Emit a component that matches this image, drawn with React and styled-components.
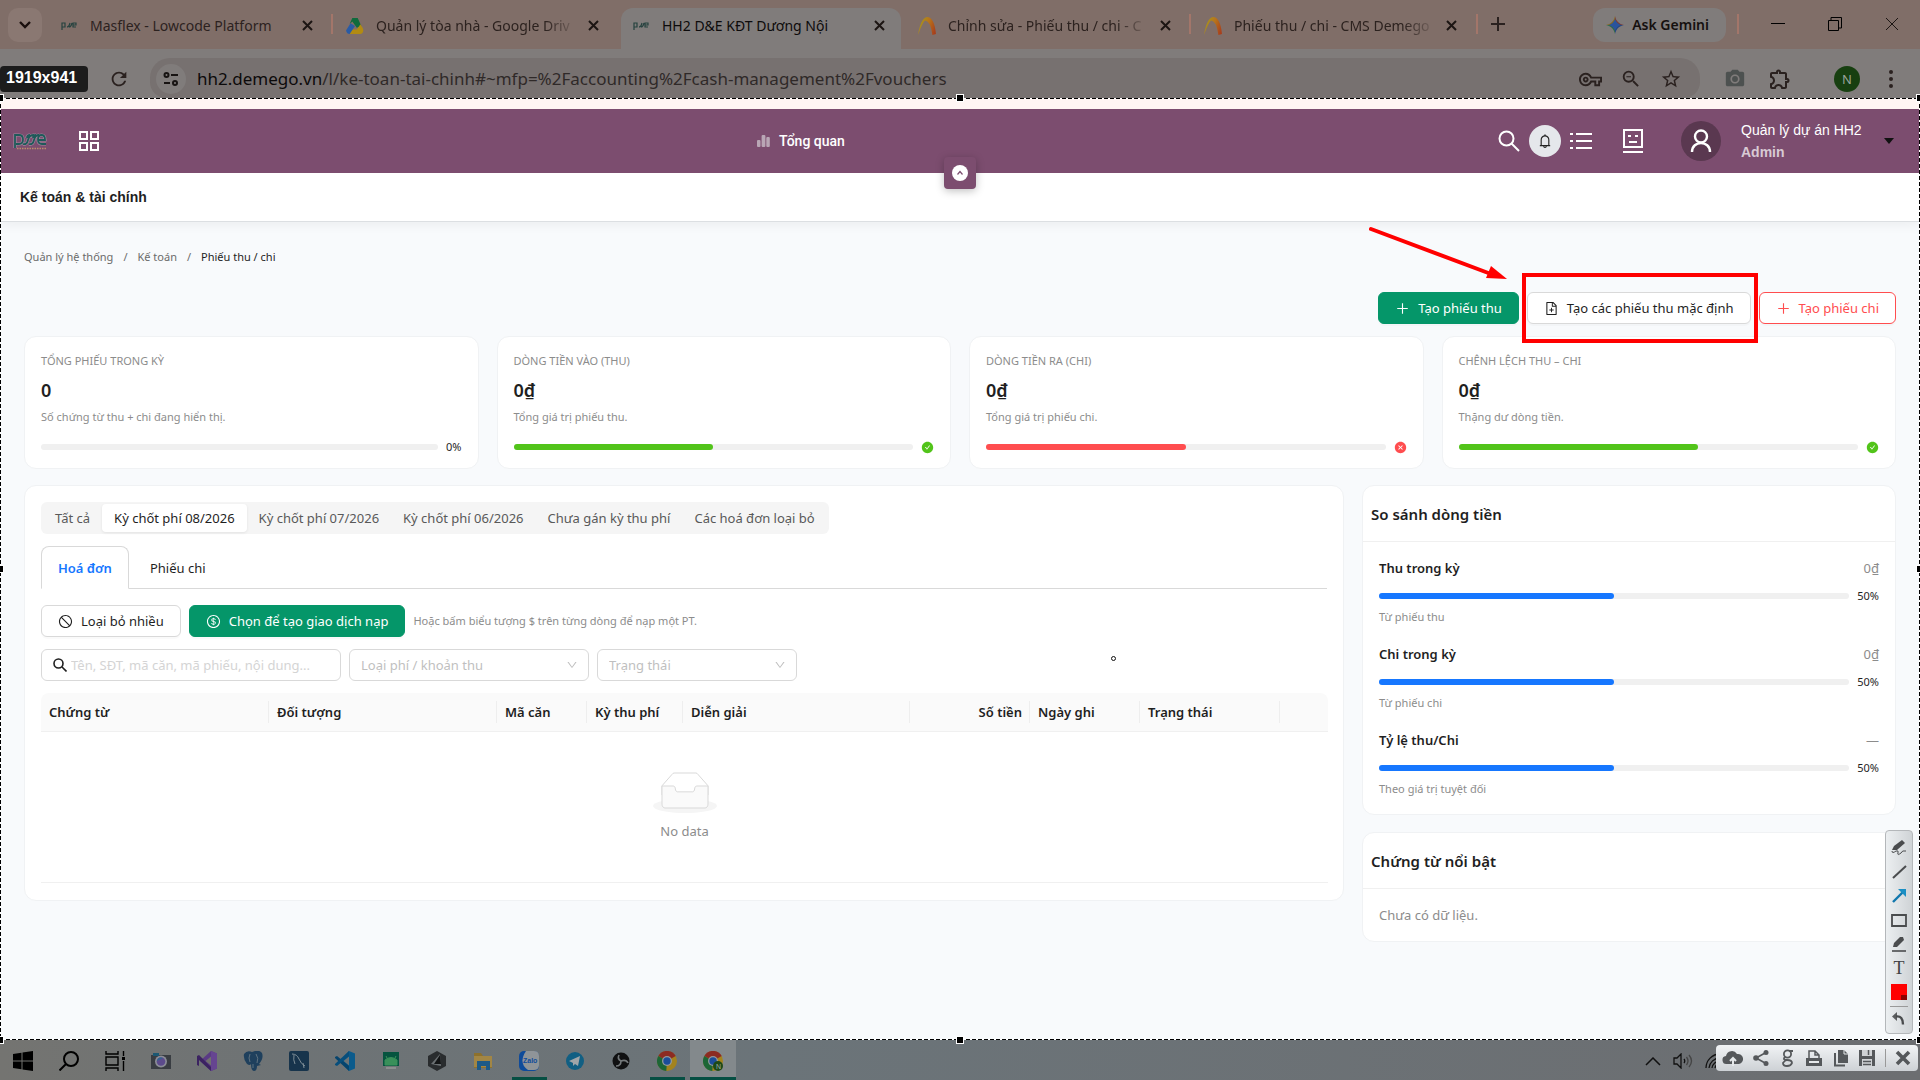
import React from "react";
import styled, { createGlobalStyle, css } from "styled-components";
import {
  AiFillCheckCircle,
  AiFillCloseCircle,
  AiOutlineBell,
  AiOutlineDollar,
  AiOutlineDown,
  AiOutlineFileAdd,
  AiOutlinePlus,
  AiOutlineStop,
} from "react-icons/ai";
import {
  MdCameraAlt,
  MdOutlineExtension,
  MdOutlineVpnKey,
  MdRefresh,
  MdStarBorder,
  MdZoomOut,
} from "react-icons/md";

const tabs = [
  { title: "Masflex - Lowcode Platform", icon: "pse" },
  { title: "Quản lý tòa nhà - Google Driv", icon: "drive", line: true, fade: true },
  { title: "HH2 D&E KĐT Dương Nội", icon: "pse", active: true },
  { title: "Chỉnh sửa - Phiếu thu / chi - C", icon: "arch", fade: true },
  { title: "Phiếu thu / chi - CMS Demego", icon: "arch", line: true, fade: true },
];

const stats = [
  { label: "TỔNG PHIẾU TRONG KỲ", value: "0", note: "Số chứng từ thu + chi đang hiển thị.", percent: 0, color: "#1677ff" },
  { label: "DÒNG TIỀN VÀO (THU)", value: "0₫", note: "Tổng giá trị phiếu thu.", percent: 50, color: "#52c41a", state: "ok" },
  { label: "DÒNG TIỀN RA (CHI)", value: "0₫", note: "Tổng giá trị phiếu chi.", percent: 50, color: "#ff4d4f", state: "bad" },
  { label: "CHÊNH LỆCH THU – CHI", value: "0₫", note: "Thặng dư dòng tiền.", percent: 60, color: "#52c41a", state: "ok" },
];

const periods = [
  "Tất cả",
  "Kỳ chốt phí 08/2026",
  "Kỳ chốt phí 07/2026",
  "Kỳ chốt phí 06/2026",
  "Chưa gán kỳ thu phí",
  "Các hoá đơn loại bỏ",
];

const columns = [
  { title: "Chứng từ", width: 228 },
  { title: "Đối tượng", width: 228 },
  { title: "Mã căn", width: 90 },
  { title: "Kỳ thu phí", width: 96 },
  { title: "Diễn giải", width: 227 },
  { title: "Số tiền", width: 120, right: true },
  { title: "Ngày ghi", width: 110 },
  { title: "Trạng thái", width: 140 },
  { title: "", width: 48 },
];

const compare = [
  { label: "Thu trong kỳ", value: "0₫", note: "Từ phiếu thu" },
  { label: "Chi trong kỳ", value: "0₫", note: "Từ phiếu chi" },
  { label: "Tỷ lệ thu/Chi", value: "—", note: "Theo giá trị tuyệt đối" },
];

const apps = [
  "windows", "search", "tasks", "camera", "vs", "postgres", "mysql", "vscode",
  "android", "cursor", "folder", "zalo", "telegram", "obs", "chrome", "chromeN",
];

export default function App() {
  return (
    <>
      <GlobalStyle />
      <Screen>
        <TabStrip>
          <TabSearch aria-label="Tabs"><Chevron /></TabSearch>
          {tabs.map((tab) => (
            <Tab key={tab.title} $active={tab.active} $line={tab.line} $fade={tab.fade}>
              <Favicon name={tab.icon} />
              <span>{tab.title}</span>
              <button aria-label="Close tab"><Cross size={11} width={2} /></button>
            </Tab>
          ))}
          <NewTab aria-label="New tab">
            <svg width="14" height="14" viewBox="0 0 14 14"><path d="M7 0v14M0 7h14" stroke="#2a211f" strokeWidth="2" /></svg>
          </NewTab>
          <Gemini>
            <svg width="18" height="18" viewBox="0 0 18 18">
              <path d="M9 0C10 5 13 8 18 9L9 9Z" fill="#7b3b36" />
              <path d="M18 9C13 10 10 13 9 18V9Z" fill="#23447f" />
              <path d="M9 18C8 13 5 10 0 9H9Z" fill="#2c6a45" />
              <path d="M0 9C5 8 8 5 9 0V9Z" fill="#8a6a1b" />
              <path d="M9 3C10 6 12 8 15 9C12 10 10 12 9 15C8 12 6 10 3 9C6 8 8 6 9 3Z" fill="#2a549c" />
            </svg>
            Ask Gemini
          </Gemini>
          <WindowButtons>
            <button aria-label="Minimize"><svg width="14" height="14" viewBox="0 0 14 14"><path d="M0 6.5h14" stroke="#000" /></svg></button>
            <button aria-label="Restore">
              <svg width="14" height="14" viewBox="0 0 14 14" fill="none" stroke="#000"><path d="M.5 3.5h10v10H.5zM3 3V.5h10.500V11H11" /></svg>
            </button>
            <button aria-label="Close"><Cross size={14} width={1} /></button>
          </WindowButtons>
        </TabStrip>

        <AddressBar>
          <SizeBadge>1919x941</SizeBadge>
          <IconButton aria-label="Reload"><MdRefresh size={22} /></IconButton>
          <Omnibox>
            <SiteInfo>
              <svg width="16" height="14" viewBox="0 0 16 14" fill="none" stroke="#171312" strokeWidth="2">
                <circle cx="3.5" cy="3" r="2" /><path d="M8 3h7M1 11h6" /><circle cx="12" cy="11" r="2" />
              </svg>
            </SiteInfo>
            <Url>
              <b>hh2.demego.vn</b>/l/ke-toan-tai-chinh#~mfp=%2Faccounting%2Fcash-management%2Fvouchers
            </Url>
            <OmniIcons>
              <MdOutlineVpnKey size={23} />
              <MdZoomOut size={22} />
              <MdStarBorder size={22} />
            </OmniIcons>
          </Omnibox>
          <ChromeTools>
            <MdCameraAlt size={22} color="#4d5150" />
            <MdOutlineExtension size={24} />
            <Profile>N</Profile>
            <svg width="4" height="18" viewBox="0 0 4 18" fill="#2a211f"><circle cx="2" cy="2" r="2" /><circle cx="2" cy="9" r="2" /><circle cx="2" cy="16" r="2" /></svg>
          </ChromeTools>
        </AddressBar>

        <Selection>
          <Header>
            <HeaderLeft>
              <Logo />
              <svg width="20" height="20" viewBox="0 0 20 20" fill="none" stroke="#fff" strokeWidth="2">
                <path d="M1 1h7v7H1zM12 1h7v7h-7zM1 12h7v7H1zM12 12h7v7h-7z" />
              </svg>
            </HeaderLeft>
            <Overview>
              <svg width="13" height="12" viewBox="0 0 13 12" fill="#b9a6b5"><rect y="5" width="3.5" height="7" rx="1" /><rect x="4.6" width="3.8" height="12" rx="1" /><rect x="9.3" y="2" width="3.5" height="10" rx="1" /></svg>
              Tổng quan
            </Overview>
            <HeaderRight>
              <svg width="22" height="22" viewBox="0 0 22 22" fill="none" stroke="#fff" strokeWidth="2"><circle cx="8.5" cy="8.5" r="7" /><path d="M13.5 13.5L21 21" /></svg>
              <Bell aria-label="Thông báo"><AiOutlineBell size={16} /></Bell>
              <svg width="22" height="18" viewBox="0 0 22 18" stroke="#fff" strokeWidth="2"><path d="M0 2h3M0 9h3M0 16h3M6 2h16M6 9h16M6 16h16" /></svg>
              <FaceIcon width="20" height="24" viewBox="0 0 20 24" fill="none" stroke="#fff" strokeWidth="2"><path d="M1 1h18v17H1zM0 23h20M6 13h8" /><path d="M5 7h3M12 7h3" /></FaceIcon>
              <Avatar>
                <svg width="22" height="24" viewBox="0 0 22 24" fill="none" stroke="#fff" strokeWidth="2.4"><circle cx="11" cy="7.5" r="6" /><path d="M2 23c0-12 18-12 18 0" /></svg>
              </Avatar>
              <User>
                <p>Quản lý dự án HH2</p>
                <b>Admin</b>
              </User>
              <svg width="10" height="6" viewBox="0 0 10 6"><path d="M0 0h10L5 6z" fill="#111" /></svg>
            </HeaderRight>
            <Collapse aria-label="Thu gọn">
              <svg width="16" height="16" viewBox="0 0 16 16"><circle cx="8" cy="8" r="8" fill="#fff" /><path d="M5.5 9.5L8 6.5l2.500 3" fill="none" stroke="#7c4d6f" strokeWidth="1.2" /></svg>
            </Collapse>
          </Header>
          <TitleBar>Kế toán &amp; tài chính</TitleBar>

          <Content>
            <Breadcrumb>
              <a href="#system">Quản lý hệ thống</a><i>/</i>
              <a href="#accounting">Kế toán</a><i>/</i>
              <span>Phiếu thu / chi</span>
            </Breadcrumb>

            <Actions>
              <Button $kind="primary"><AiOutlinePlus />Tạo phiếu thu</Button>
              <Highlight>
                <Arrow width="140" height="58" viewBox="0 0 140 58">
                  <path d="M2 3L122 48" stroke="#f00" strokeWidth="4" strokeLinecap="round" />
                  <path d="M138 53L117 52L122 40Z" fill="#f00" />
                </Arrow>
                <Button><AiOutlineFileAdd />Tạo các phiếu thu mặc định</Button>
              </Highlight>
              <Button $kind="danger"><AiOutlinePlus />Tạo phiếu chi</Button>
            </Actions>

            <Stats>
              {stats.map((s) => (
                <Stat key={s.label}>
                  <h4>{s.label}</h4>
                  <strong>{s.value}</strong>
                  <p>{s.note}</p>
                  <Progress percent={s.percent} color={s.color} state={s.state} />
                </Stat>
              ))}
            </Stats>

            <Columns>
              <Panel>
                <Segmented>
                  {periods.map((p, i) => (
                    <Segment key={p} $active={i === 1}>{p}</Segment>
                  ))}
                </Segmented>

                <CardTabs>
                  <CardTab $active>Hoá đơn</CardTab>
                  <CardTab>Phiếu chi</CardTab>
                </CardTabs>

                <Toolbar>
                  <Button><AiOutlineStop />Loại bỏ nhiều</Button>
                  <Button $kind="primary"><AiOutlineDollar />Chọn để tạo giao dịch nạp</Button>
                  <Hint>Hoặc bấm biểu tượng $ trên từng dòng để nạp một PT.</Hint>
                </Toolbar>

                <Toolbar>
                  <Search>
                    <svg width="14" height="14" viewBox="0 0 14 14" fill="none" stroke="#1f1f1f" strokeWidth="1.6"><circle cx="5.5" cy="5.5" r="4.5" /><path d="M9 9l4.500 4.500" /></svg>
                    <input aria-label="Tìm kiếm" placeholder="Tên, SĐT, mã căn, mã phiếu, nội dung..." />
                  </Search>
                  <Select label="Loại phí / khoản thu" width={240} />
                  <Select label="Trạng thái" width={200} />
                </Toolbar>

                <Table>
                  <colgroup>
                    {columns.map((c, i) => <Col key={i} $width={c.width} />)}
                  </colgroup>
                  <thead>
                    <tr>
                      {columns.map((c, i) => <Th key={i} $right={c.right}>{c.title}</Th>)}
                    </tr>
                  </thead>
                  <tbody>
                    <tr>
                      <Empty colSpan={columns.length}>
                        <svg width="64" height="41" viewBox="0 0 64 41">
                          <g transform="translate(0 1)" fill="none" fillRule="evenodd">
                            <ellipse fill="#f5f5f5" cx="32" cy="33" rx="32" ry="7" />
                            <g fillRule="nonzero" stroke="#d9d9d9">
                              <path d="M55 12.760L44.854 1.258C44.367.474 43.656 0 42.907 0H21.093c-.749 0-1.460.474-1.947 1.257L9 12.761V22h46v-9.240z" />
                              <path d="M41.613 15.931c0-1.605.994-2.930 2.227-2.931H55v18.137C55 33.260 53.680 35 52.050 35h-40.100C10.320 35 9 33.259 9 31.137V13h11.160c1.233 0 2.227 1.323 2.227 2.928v.022c0 1.605 1.005 2.901 2.237 2.901h14.752c1.232 0 2.237-1.308 2.237-2.913v-.007z" fill="#fafafa" />
                            </g>
                          </g>
                        </svg>
                        <p>No data</p>
                      </Empty>
                    </tr>
                  </tbody>
                </Table>
                <Cursor />
              </Panel>

              <Side>
                <SideCard>
                  <h3>So sánh dòng tiền</h3>
                  <SideBody>
                    {compare.map((row) => (
                      <div key={row.label}>
                        <RowHead><b>{row.label}</b><span>{row.value}</span></RowHead>
                        <Progress percent={50} color="#1677ff" />
                        <RowNote>{row.note}</RowNote>
                      </div>
                    ))}
                  </SideBody>
                </SideCard>
                <SideCard>
                  <h3>Chứng từ nổi bật</h3>
                  <SideBody>Chưa có dữ liệu.</SideBody>
                </SideCard>
              </Side>
            </Columns>
          </Content>

          <Marquee>
            <Handle $x="0%" $y="0%" /><Handle $x="50%" $y="0%" /><Handle $x="100%" $y="0%" />
            <Handle $x="0%" $y="50%" /><Handle $x="100%" $y="50%" />
            <Handle $x="0%" $y="100%" /><Handle $x="50%" $y="100%" /><Handle $x="100%" $y="100%" />
          </Marquee>
          <DrawTools><DrawIcons /></DrawTools>
        </Selection>

        <Taskbar>
          {apps.map((name) => (
            <TaskItem
              key={name}
              aria-label={name}
              $open={name === "zalo" || name === "chrome"}
              $active={name === "chromeN"}
            >
              <AppIcon name={name} />
            </TaskItem>
          ))}
          <Tray>
            <svg width="16" height="9" viewBox="0 0 16 9" fill="none" stroke="#111" strokeWidth="1.5"><path d="M1 8l7-7 7 7" /></svg>
            <svg width="20" height="16" viewBox="0 0 20 16" fill="none" stroke="#111" strokeWidth="1.3">
              <path d="M1 5h3l4-4v14l-4-4H1zM11 6q1.500 2 0 4" /><path d="M13.5 4q3 4 0 8M16 2q5 6 0 12" stroke="#444" />
            </svg>
            <svg width="16" height="16" viewBox="0 0 16 16" fill="none" stroke="#111" strokeWidth="1.3"><path d="M1 15A14 14 0 0 1 15 1M4 15A11 11 0 0 1 15 5M7 15A8 8 0 0 1 15 8M10 15A5 5 0 0 1 15 11" /></svg>
          </Tray>
          <ShareTools><ShareIcons /></ShareTools>
        </Taskbar>
      </Screen>
    </>
  );
}

function Chevron() {
  return (
    <svg width="12" height="8" viewBox="0 0 12 8" fill="none" stroke="#1a0f0d" strokeWidth="2.4"><path d="M1 1l5 5 5-5" /></svg>
  );
}

function Cross({ size, width }) {
  return (
    <svg width={size} height={size} viewBox={`0 0 ${size} ${size}`} stroke="#1c1513" strokeWidth={width}>
      <path d={`M1 1L${size - 1} ${size - 1}M${size - 1} 1L1 ${size - 1}`} />
    </svg>
  );
}

const logoPath =
  "M2 16V3h4q4 0 4 4.500T6 12H3M10 12q4 1 5-4t6-5M16 12q4 1 5-4t5-5M14 6q0-3 3-3M20 6q0-3 3-3M25 8h7q0-5-3.500-5T25 7.500 29 12h4";

function Logo() {
  return (
    <svg width="34" height="18" viewBox="0 0 34 18" fill="none" aria-label="pse">
      <path d={logoPath} stroke="#c9c3cb" strokeWidth="3.2" opacity="0.5" />
      <path d={logoPath} stroke="#1f5a5a" strokeWidth="1.8" />
      <path d="M4 16.5h29" stroke="#b98f6c" strokeWidth="1.6" strokeDasharray="1.5 1" />
    </svg>
  );
}

function Favicon({ name }) {
  if (name === "drive")
    return (
      <svg width="20" height="20" viewBox="0 0 20 20">
        <path d="M7 1h6l4 9-5 2-5-7-3 3z" fill="#0f6b3d" />
        <path d="M4 19h12q4-1 3-6l-3-5-4 6H7z" fill="#b28b12" />
        <path d="M5 7L0 15q1 4 4 4l6-9z" fill="#2a5ba5" />
      </svg>
    );
  if (name === "arch")
    return (
      <svg width="20" height="20" viewBox="0 0 20 20">
        <defs>
          <linearGradient id="arch" x1="0" x2="1" y1="0.3" y2="0.7">
            <stop offset="0" stopColor="#a39a1c" /><stop offset="0.5" stopColor="#b8731b" /><stop offset="1" stopColor="#a8401c" />
          </linearGradient>
        </defs>
        <path d="M0 20Q3 1 10 0q8 0 10 19l-4 1Q14 5 8 4 5 6 0 20z" fill="url(#arch)" />
      </svg>
    );
  return (
    <svg width="16" height="8" viewBox="0 0 16 8" fill="none" stroke="#25423f" strokeWidth="1.2">
      <path d="M1 8V1h3v4H1M6 5q2 0 3-4M8 5q2 0 3-4M12 3h3V1h-3v4h3" />
    </svg>
  );
}

function Progress({ percent, color, state }) {
  return (
    <ProgressRow>
      <Track role="progressbar" aria-valuenow={percent}>
        <Fill style={{ width: `${percent}%`, background: color }} />
      </Track>
      {state === "ok" && <AiFillCheckCircle size={13} color={color} />}
      {state === "bad" && <AiFillCloseCircle size={13} color={color} />}
      {!state && <span>{percent}%</span>}
    </ProgressRow>
  );
}

function Select({ label, width }) {
  return (
    <SelectBox $width={width}>
      <select aria-label={label} defaultValue="">
        <option value="">{label}</option>
      </select>
      <AiOutlineDown size={12} />
    </SelectBox>
  );
}

function AppIcon({ name }) {
  const size = { width: 20, height: 20, viewBox: "0 0 20 20" };
  switch (name) {
    case "windows":
      return <svg {...size}><path d="M0 3l8.500-1.200v7.700H0zM9.500 1.600L20 0v9.500H9.500zM0 10.500h8.500v7.700L0 17zM9.500 10.500H20V20L9.500 18.400z" /></svg>;
    case "search":
      return <svg {...size} fill="none" stroke="#000" strokeWidth="2"><circle cx="12" cy="8" r="7" /><path d="M7 13L.5 19.500" /></svg>;
    case "tasks":
      return (
        <svg {...size} fill="none" stroke="#000" strokeWidth="1.4">
          <path d="M1 0v3h12V0M1 20v-3h12v3M1 6h12v8H1zM18.500 0v5M18.500 10v10" /><path d="M17 7.500h3" strokeWidth="3" />
        </svg>
      );
    case "camera":
      return (
        <svg {...size}>
          <path d="M0 4h20v14H0z" fill="#393d42" /><path d="M2 2h6v3H2z" fill="#1c5873" />
          <circle cx="10" cy="10.5" r="6" fill="#8b8d96" /><circle cx="10" cy="10.5" r="4.3" fill="#5c4b8c" /><path d="M6 10a4 4 0 0 1 6-3z" fill="#2d668f" />
        </svg>
      );
    case "vs":
      return (
        <svg {...size}>
          <path d="M14 0l6 2.500v15L14 20 3 10z" fill="#5a3a85" /><path d="M14 5.500v9L8.500 10z" fill="#70706e" />
          <path d="M0 5l2-1 12 12v4L2 9v6l-2-1z" fill="#3b2361" /><path d="M14 0l6 2.500v15L14 20z" fill="#664591" />
        </svg>
      );
    case "postgres":
      return (
        <svg {...size}>
          <path d="M1 3q3-4 8-2 7-3 10 1 2 5-3 11l2 1-4 1q0 5-3 5t-3-7q-1 2-4 0Q0 8 1 3z" fill="#1f405d" />
          <path d="M7 3q-2 4 0 8M13 3q3 4 1 9M10 13v4" stroke="#5f7280" fill="none" />
        </svg>
      );
    case "mysql":
      return (
        <svg {...size}>
          <rect width="20" height="20" rx="2" fill="#17344c" />
          <path d="M3 3q5 0 7 5t6 7M5 4q-1 5 1 9M14 12l1 5" stroke="#7e8d96" fill="none" />
        </svg>
      );
    case "vscode":
      return (
        <svg {...size}>
          <path d="M14 0l6 2.500v15L14 20 5 10z" fill="#0b5b8c" /><path d="M14 5.500v9L8.500 10z" fill="#6d7476" />
          <path d="M0 6l2-1 12 10v5L0 7z" fill="#06446d" /><path d="M0 14l2 1L14 5V0L0 13z" fill="#074e7c" />
        </svg>
      );
    case "android":
      return (
        <svg {...size}>
          <path d="M2 1h16v14H2z" fill="#06543f" /><path d="M4 14V9q6-5 12 0v5zM5 5l2 4M15 5l-2 4" fill="#39905a" stroke="#39905a" /><path d="M5 16h10v2H5z" fill="#8b8f8e" />
        </svg>
      );
    case "cursor":
      return (
        <svg {...size}>
          <path d="M10 0l9 5v10l-9 5-9-5V5z" fill="#292c2e" /><path d="M13 3L4 13l10 2z" fill="#6b7073" /><path d="M13 4L7 13h7z" fill="#131516" />
        </svg>
      );
    case "folder":
      return (
        <svg {...size}>
          <path d="M1 2h7l2 3h9v12H1z" fill="#8d712d" /><path d="M1 5h18v11H1z" fill="#a28645" /><path d="M4 19v-9h13v9h-4v-4H8v4z" fill="#1d5a87" />
        </svg>
      );
    case "zalo":
      return (
        <svg {...size}>
          <rect width="20" height="20" rx="5" fill="#0f4b9a" /><path d="M7 0h8q5 0 5 5v9q0 5-5 5H9Q-1 12 7 0z" fill="#8f9498" />
          <text x="4" y="12" fontSize="7" fontWeight="700" fontFamily="Liberation Sans, sans-serif" fill="#0f4b9a">Zalo</text>
        </svg>
      );
    case "telegram":
      return <svg {...size}><circle cx="10" cy="10" r="9" fill="#115f83" /><path d="M4 10l11-5-2 10-3-2-2 2v-3z" fill="#a0a5a8" /></svg>;
    case "obs":
      return (
        <svg {...size}>
          <circle cx="10" cy="10" r="8.5" fill="#101112" /><path d="M10 10q-4-2-2-6M10 10q5-2 7 2M10 10q0 5-5 5" stroke="#74797b" strokeWidth="1.6" fill="none" />
        </svg>
      );
    default:
      return (
        <svg {...size}>
          <circle cx="10" cy="10" r="10" fill="#a3831e" />
          <path d="M10 10L1.300 5a10 10 0 0 1 17.400 0z" fill="#8c2b22" />
          <path d="M10 10L1.300 5a10 10 0 0 0 8 15z" fill="#1d6636" />
          <circle cx="10" cy="10" r="5" fill="#94999c" /><circle cx="10" cy="10" r="3.7" fill="#1b4d9a" />
          {name === "chromeN" && (
            <>
              <circle cx="15" cy="15" r="5" fill="#1e4a16" />
              <text x="13" y="18" fontSize="7" fontFamily="Liberation Sans, sans-serif" fill="#9aa">N</text>
            </>
          )}
        </svg>
      );
  }
}

function DrawIcons() {
  const size = { width: 16, height: 16, viewBox: "0 0 16 16", fill: "none", stroke: "#4a4c4e", strokeWidth: 1.6 };
  return (
    <>
      <button aria-label="Pen"><svg {...size}><path d="M1 10l2-4 8-6 3 3-8 7z" fill="#4a4c4e" stroke="none" /><path d="M1 11q0 3 4 0 3-1 2 2t3 0q1-3 5-2" strokeWidth="1" /></svg></button>
      <button aria-label="Line"><svg {...size}><path d="M2 14L15 2" strokeWidth="2" /></svg></button>
      <button aria-label="Arrow"><svg {...size}><path d="M2 14L12 4" stroke="#1277ad" strokeWidth="2.4" /><path d="M7 1h8v8z" fill="#1b8fc4" stroke="none" /></svg></button>
      <button aria-label="Rectangle"><svg {...size}><path d="M1 3h14v11H1z" strokeWidth="1.8" /></svg></button>
      <button aria-label="Marker"><svg {...size}><path d="M2 11l1-4 6-6h3l1 3-7 7z" fill="#4a4c4e" stroke="none" /><path d="M1 15h14" /></svg></button>
      <ToolText aria-label="Text">T</ToolText>
      <Swatch aria-label="Color" />
      <hr />
      <button aria-label="Undo"><svg {...size}><path d="M6 1v9L1 5.500z" fill="#5a5c5e" stroke="none" /><path d="M5 5.500q7-1 7 8" strokeWidth="2.4" /></svg></button>
    </>
  );
}

function ShareIcons() {
  const size = { width: 18, height: 18, viewBox: "0 0 18 18", fill: "none", stroke: "#55585b", strokeWidth: 2 };
  return (
    <>
      <button aria-label="Upload">
        <svg {...size} width="22" viewBox="0 0 22 18"><path d="M5 15a4 4 0 0 1-1-8 6 6 0 0 1 11-2 5 5 0 0 1 2 10z" fill="#55585b" stroke="none" /><path d="M11 17V9M8 12l3-3 3 3" stroke="#e5e8ea" /></svg>
      </button>
      <button aria-label="Share"><svg {...size} strokeWidth="1.6"><path d="M14 3.500L4 9l10 5.500" /><g fill="#55585b" stroke="none"><circle cx="14" cy="3.5" r="2.5" /><circle cx="4" cy="9" r="2.8" /><circle cx="14" cy="14.5" r="2.5" /></g></svg></button>
      <button aria-label="Search image">
        <svg {...size} strokeWidth="1.8"><circle cx="8.500" cy="5" r="3.600" /><path d="M10 2h4M6 8q-3 3 2 3t5 3q-1 3-5 3t-4-3q1-2 4-3" /></svg>
      </button>
      <button aria-label="Print"><svg {...size}><path d="M1 9h16v8H1z" fill="#55585b" stroke="none" /><path d="M4 9V2h6l4 4v3M10 2v4h4" strokeWidth="1.5" /><path d="M4 13h10" stroke="#e5e8ea" /></svg></button>
      <button aria-label="Copy"><svg {...size}><path d="M6 1h6l4 4v9H6z" fill="#55585b" stroke="none" /><path d="M12 1v4h4" stroke="#e5e8ea" strokeWidth="1" /><path d="M3 4v12.500h10" /></svg></button>
      <button aria-label="Save"><svg {...size}><path d="M1 1h16v16H1z" fill="#55585b" stroke="none" /><path d="M4 1h10v6H4zM4 10h10v7H4z" fill="#cfd2d5" stroke="none" /><path d="M10.500 1v5M5 12.500h8M5 15.500h8" strokeWidth="1.5" /></svg></button>
      <i />
      <button aria-label="Close"><svg {...size}><path d="M3 3l12 12M15 3L3 15" strokeWidth="3.6" /></svg></button>
    </>
  );
}

const GlobalStyle = createGlobalStyle`
  * {
    box-sizing: border-box;
  }

  body, h3, h4, p {
    margin: 0;
  }

  body {
    font-family: "Noto Sans", sans-serif;
    font-size: 13px;
    line-height: 22px;
    color: #1f1f1f;
  }

  button, input, select {
    font: inherit;
    color: inherit;
    margin: 0;
    padding: 0;
    border: none;
    background: none;
  }

  svg {
    flex: none;
    display: block;
  }
`;

const Screen = styled.div`
  min-height: 100vh;
  display: flex;
  flex-direction: column;
  overflow: hidden;
`;

const TabStrip = styled.div`
  display: flex;
  align-items: stretch;
  height: 49px;
  padding-top: 8px;
  padding-left: 8px;
  background: #806e68;
  color: #2c221f;
`;

const TabSearch = styled.button`
  display: grid;
  place-items: center;
  width: 34px;
  height: 34px;
  margin-right: 4px;
  border-radius: 10px;
  background: #8a7872;
`;

const Tab = styled.div`
  position: relative;
  display: flex;
  align-items: center;
  width: 280px;
  height: 41px;
  margin: 0 3px;
  padding: 0 12px 6px 11px;
  gap: 12px;
  font-size: 14px;
  border-radius: 12px 12px 0 0;
  background: ${({ $active }) => ($active ? "#807c7b" : "transparent")};
  color: ${({ $active }) => ($active ? "#0d0b0b" : "#2c221f")};

  ${({ $line }) => $line && css`
    &::before {
      content: "";
      position: absolute;
      left: -4px;
      top: 6px;
      width: 2px;
      height: 20px;
      background: #a3766a;
    }
  `}

  > svg {
    width: 18px;
  }

  span {
    flex: 1;
    white-space: nowrap;
    ${({ $fade }) => $fade && "mask-image: linear-gradient(to right, #000 86%, rgba(0, 0, 0, 0.2));"}
  }

  button {
    padding: 4px;
  }
`;

const NewTab = styled.button`
  display: grid;
  place-items: center;
  width: 44px;
  height: 32px;
  background: linear-gradient(#a3766a, #a3766a) 0 6px / 2px 20px no-repeat;
`;

const Gemini = styled.button`
  display: flex;
  align-items: center;
  gap: 8px;
  height: 34px;
  margin-left: auto;
  padding: 0 17px 0 13px;
  border-radius: 12px;
  background: #807c7b;
  color: #15100f;
  font-size: 14px;
  font-weight: 600;
`;

const WindowButtons = styled.div`
  display: flex;
  height: 32px;
  margin-left: 11px;
  padding-left: 12px;
  background: linear-gradient(#a3766a, #a3766a) 0 6px / 2px 20px no-repeat;

  button {
    display: grid;
    place-items: center;
    width: 57px;
  }
`;

const AddressBar = styled.div`
  display: flex;
  align-items: center;
  height: 49px;
  background: #807c7b;
  color: #2a211f;
`;

const SizeBadge = styled.div`
  align-self: end;
  width: 88px;
  height: 26px;
  margin-bottom: 6px;
  padding-left: 6px;
  border-radius: 4px;
  background: #1c1c1c;
  color: #fff;
  font: bold 16px/23px "Liberation Sans", sans-serif;
`;

const IconButton = styled.button`
  display: grid;
  place-items: center;
  width: 62px;
  padding-top: 10px;
`;

const Omnibox = styled.div`
  flex: 1;
  display: flex;
  align-items: center;
  align-self: end;
  height: 40px;
  padding: 2px 18px 0 6px;
  border-radius: 20px 20px 16px 16px;
  background: #777170;
`;

const SiteInfo = styled.span`
  display: grid;
  place-items: center;
  width: 30px;
  height: 30px;
  border-radius: 50%;
  background: #807c7b;
`;

const Url = styled.span`
  flex: 1;
  padding-left: 11px;
  font-size: 17px;
  color: #2f2928;

  b {
    font-weight: 400;
    color: #0c0a0a;
  }
`;

const OmniIcons = styled.div`
  display: flex;
  align-items: center;
  gap: 18px;
`;

const ChromeTools = styled.div`
  display: flex;
  align-items: center;
  gap: 22px;
  padding: 10px 27px 0 24px;
`;

const Profile = styled.span`
  width: 26px;
  height: 26px;
  margin-left: 20px;
  margin-right: 7px;
  border-radius: 50%;
  background: #173f10;
  color: #9aa39a;
  line-height: 26px;
  text-align: center;
`;

const Selection = styled.main`
  position: relative;
  flex: 1;
  padding-top: 11px;
  background: linear-gradient(#fff5f3 11px, #f8fafc 11px);
`;

const Header = styled.header`
  position: relative;
  z-index: 1;
  display: grid;
  grid-template-columns: 1fr auto 1fr;
  align-items: center;
  height: 64px;
  background: #7c4d6f;
  color: #fff;
`;

const HeaderLeft = styled.div`
  display: flex;
  align-items: center;
  gap: 32px;
  padding-left: 13px;
`;

/* sits left of the collapse handle, not on the centre line */
const Overview = styled.div`
  display: flex;
  align-items: center;
  gap: 9px;
  margin-right: 318px;
  font: 500 14px/20px Roboto, sans-serif;
`;

const HeaderRight = styled.div`
  display: flex;
  align-items: center;
  justify-content: flex-end;
  gap: 9px;
  padding-right: 26px;
`;

const Bell = styled.button`
  display: grid;
  place-items: center;
  width: 32px;
  height: 32px;
  border-radius: 50%;
  background: #e5e7eb;
  color: #222;
`;

const FaceIcon = styled.svg`
  margin-left: 22px;
`;

const Avatar = styled.span`
  display: grid;
  place-items: center;
  width: 40px;
  height: 40px;
  margin-left: 29px;
  border-radius: 50%;
  background: #5a3850;
`;

const User = styled.div`
  width: 134px;
  margin-left: 11px;
  font: 14px/22px "Liberation Sans", sans-serif;

  b {
    color: #d8cad4;
  }
`;

const Collapse = styled.button`
  position: absolute;
  left: 50%;
  top: 48px;
  display: grid;
  place-items: center;
  width: 32px;
  height: 32px;
  transform: translateX(-50%);
  border-radius: 4px;
  background: #7c4d6f;
  box-shadow: 0 2px 8px rgba(0, 0, 0, 0.25);
`;

const TitleBar = styled.div`
  height: 49px;
  padding-left: 20px;
  border-bottom: 1px solid #dcdfe2;
  background: #fff;
  box-shadow: 0 2px 12px rgba(0, 0, 0, 0.06);
  font: bold 14px/48px "Liberation Sans", sans-serif;
`;

const Content = styled.div`
  padding: 24px;
`;

const Breadcrumb = styled.nav`
  display: flex;
  gap: 10px;
  font-size: 11px;

  a {
    color: #6b6b6b;
    text-decoration: none;
  }

  i {
    color: #6b6b6b;
    font-style: normal;
  }
`;

const Actions = styled.div`
  display: flex;
  justify-content: flex-end;
  gap: 8px;
  margin: 24px 0 12px;
`;

const Button = styled.button`
  display: flex;
  align-items: center;
  gap: 8px;
  height: 32px;
  padding: 0 16px;
  border: 1px solid #d9d9d9;
  border-radius: 6px;
  background: #fff;
  box-shadow: 0 2px 0 rgba(0, 0, 0, 0.02);

  svg {
    font-size: 15px;
  }

  ${({ $kind }) => $kind === "primary" && css`
    border-color: #059669;
    background: #059669;
    color: #fff;
  `}

  ${({ $kind }) => $kind === "danger" && css`
    border-color: #ff4d4f;
    color: #ff4d4f;
  `}
`;

const Highlight = styled.div`
  position: relative;

  &::after {
    content: "";
    position: absolute;
    inset: -19px -7px -19px -5px;
    border: 4px solid #f00;
  }
`;

const Arrow = styled.svg`
  position: absolute;
  right: 100%;
  bottom: 40px;
  margin-right: 18px;
`;

const Stats = styled.div`
  display: grid;
  grid-template-columns: repeat(4, 1fr);
  gap: 18px;
`;

const Stat = styled.section`
  padding: 16px 16px 11px;
  border: 1px solid #f0f2f4;
  border-radius: 12px;
  background: #fff;

  h4 {
    font-size: 11px;
    font-weight: 400;
    line-height: 16px;
    color: #8c8c8c;
  }

  strong {
    display: block;
    margin: 8px 0 4px;
    font-size: 18px;
    font-weight: 600;
    line-height: 26px;
  }

  p {
    margin-bottom: 10px;
    font-size: 11px;
    line-height: 20px;
    color: #8c8c8c;
  }
`;

const ProgressRow = styled.div`
  display: flex;
  align-items: center;
  gap: 8px;
  height: 20px;
  font-size: 11px;
`;

const Track = styled.div`
  flex: 1;
  height: 6px;
  border-radius: 3px;
  background: #f0f0f0;
`;

const Fill = styled.div`
  height: 6px;
  border-radius: 3px;
`;

const Columns = styled.div`
  display: grid;
  grid-template-columns: 220fr 89fr;
  align-items: start;
  gap: 18px;
  margin-top: 16px;
`;

const Panel = styled.section`
  position: relative;
  min-width: 0;
  padding: 16px 16px 17px;
  border: 1px solid #f0f2f4;
  border-radius: 12px;
  background: #fff;
`;

const Segmented = styled.div`
  display: flex;
  width: max-content;
  padding: 2px;
  border-radius: 6px;
  background: #f5f5f5;
`;

const Segment = styled.button`
  height: 28px;
  padding: 0 12px;
  border-radius: 4px;
  color: #595959;

  ${({ $active }) => $active && css`
    background: #fff;
    color: #1f1f1f;
    box-shadow: 0 1px 3px rgba(0, 0, 0, 0.08);
  `}
`;

const CardTabs = styled.div`
  display: flex;
  gap: 4px;
  height: 43px;
  margin: 12px 0 16px;
  border-bottom: 1px solid #d9d9d9;
`;

const CardTab = styled.button`
  height: 43px;
  padding: 0 16px;
  border: 1px solid transparent;
  border-radius: 8px 8px 0 0;

  ${({ $active }) => $active && css`
    border-color: #d9d9d9;
    border-bottom-color: #fff;
    background: #fff;
    color: #1677ff;
    font-weight: 600;
  `}
`;

const Toolbar = styled.div`
  display: flex;
  align-items: center;
  gap: 8px;
  margin-bottom: 12px;
`;

const Hint = styled.span`
  font-size: 11px;
  color: #8c8c8c;
`;

const Search = styled.label`
  display: flex;
  align-items: center;
  gap: 4px;
  width: 300px;
  height: 32px;
  padding: 0 11px;
  border: 1px solid #d9d9d9;
  border-radius: 6px;

  input {
    flex: 1;
    min-width: 0;
    outline: none;
  }

  input::placeholder {
    color: #d4d4d4;
  }
`;

const SelectBox = styled.div`
  display: grid;
  grid-template-columns: 1fr auto;
  align-items: center;
  width: ${({ $width }) => $width}px;
  height: 32px;
  padding: 0 10px 0 11px;
  border: 1px solid #d9d9d9;
  border-radius: 6px;
  color: #bfbfbf;

  select {
    appearance: none;
    outline: none;
  }
`;

const Table = styled.table`
  width: 100%;
  table-layout: fixed;
  border-collapse: separate;
  border-spacing: 0;
`;

const Col = styled.col`
  width: ${({ $width }) => $width}px;
`;

const Th = styled.th`
  height: 39px;
  padding: 0 8px;
  border-bottom: 1px solid #f0f0f0;
  background: linear-gradient(#eeeeee, #eeeeee) right center / 1px 22px no-repeat #fafafa;
  font-weight: 600;
  text-align: ${({ $right }) => ($right ? "right" : "left")};

  &:first-child {
    border-top-left-radius: 8px;
  }

  &:last-child {
    border-top-right-radius: 8px;
    background: #fafafa;
  }
`;

const Empty = styled.td`
  height: 151px;
  padding: 0;
  border-bottom: 1px solid #f0f0f0;
  color: #8c8c8c;
  text-align: center;

  svg {
    margin: 0 auto 7px;
  }
`;

const Cursor = styled.i`
  position: absolute;
  left: 1086px;
  top: 170px;
  width: 5px;
  height: 5px;
  border: 1px solid #111;
  border-radius: 50%;
`;

const Side = styled.aside`
  display: grid;
  gap: 17px;
  min-width: 0;
`;

const SideCard = styled.section`
  border: 1px solid #f0f2f4;
  border-radius: 12px;
  background: #fff;

  h3 {
    height: 56px;
    padding: 0 8px;
    border-bottom: 1px solid #f0f0f0;
    font-size: 15px;
    font-weight: 600;
    line-height: 56px;
  }
`;

const SideBody = styled.div`
  display: grid;
  gap: 16px;
  padding: 15px 16px;
  color: #8c8c8c;

  ${ProgressRow} {
    height: 28px;
    padding-top: 6px;
    color: #1f1f1f;
  }
`;

const RowHead = styled.div`
  display: flex;
  justify-content: space-between;

  b {
    font-weight: 600;
    color: #1f1f1f;
  }
`;

const RowNote = styled.p`
  font-size: 11px;
  line-height: 20px;
`;

/* dashed frame of the capture area */
const Marquee = styled.div`
  position: absolute;
  inset: 0;
  z-index: 2;
  pointer-events: none;
  background:
    repeating-linear-gradient(to right, #000 0 4px, #fff 4px 6px) 0 0 / 100% 1px no-repeat,
    repeating-linear-gradient(to right, #000 0 4px, #fff 4px 6px) 0 100% / 100% 1px no-repeat,
    repeating-linear-gradient(to bottom, #000 0 4px, #fff 4px 6px) 0 0 / 1px 100% no-repeat,
    repeating-linear-gradient(to bottom, #000 0 4px, #fff 4px 6px) 100% 0 / 1px 100% no-repeat;
`;

const Handle = styled.i`
  position: absolute;
  left: ${({ $x }) => $x};
  top: ${({ $y }) => $y};
  width: 8px;
  height: 8px;
  margin: -4px;
  border: 1px solid #fff;
  background: #000;
`;

const DrawTools = styled.div`
  position: absolute;
  right: 7px;
  bottom: 6px;
  z-index: 3;
  display: flex;
  flex-direction: column;
  align-items: center;
  gap: 8px;
  width: 28px;
  height: 204px;
  padding-top: 9px;
  border: 1px solid #b4b7ba;
  border-radius: 4px;
  background: linear-gradient(to right, #eceff1, #cfd3d6);

  hr {
    width: 18px;
    margin: -2px 0 -4px;
    border: none;
    border-top: 1px solid #999;
  }
`;

const ToolText = styled.button`
  height: 16px;
  font: 18px/16px "Liberation Serif", serif;
  color: #3f4143;
`;

const Swatch = styled.button`
  width: 16px;
  height: 16px;
  background: linear-gradient(#8b0000, #8b0000) right bottom / 6px 5px no-repeat #f00;
`;

const Taskbar = styled.footer`
  position: relative;
  display: flex;
  height: 40px;
  background: linear-gradient(to right, #747471, #6e7375 15%, #6b7479 40%, #6c6e71);
`;

const TaskItem = styled.button`
  display: grid;
  place-items: center;
  width: 46px;
  padding-top: 2px;

  ${({ $open }) => $open && css`
    background: linear-gradient(#064f43, #064f43) center bottom / 35px 3px no-repeat;
  `}

  ${({ $active }) => $active && css`
    background: linear-gradient(#064f43, #064f43) center bottom / 100% 3px no-repeat #83898c;
  `}
`;

const Tray = styled.div`
  display: flex;
  align-items: center;
  gap: 12px;
  margin-left: auto;
  margin-right: 199px;
  padding-top: 2px;
`;

const ShareTools = styled.div`
  position: absolute;
  right: 2px;
  bottom: 9px;
  display: flex;
  align-items: center;
  justify-content: space-between;
  width: 202px;
  height: 26px;
  padding: 0 6px;
  border-radius: 4px;
  background: linear-gradient(#f1f3f5, #cdd1d5);

  i {
    width: 1px;
    height: 18px;
    background: #999;
  }
`;
